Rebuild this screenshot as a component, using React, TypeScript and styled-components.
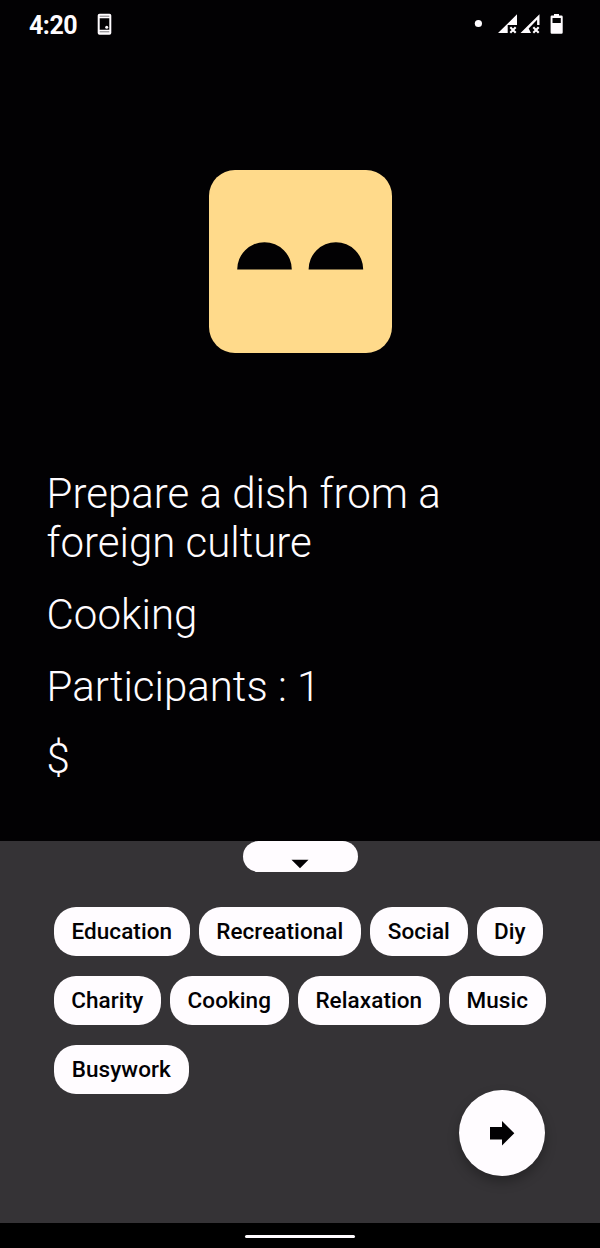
import React from "react";
import styled, { createGlobalStyle } from "styled-components";

const Global = createGlobalStyle`
  * { box-sizing: border-box; }
  body { margin: 0; background: #020103; font-family: Roboto, sans-serif; }
`;
const Screen = styled.main`
  width: 600px; height: 1248px; display: flex; flex-direction: column;
  background: #020103; color: #fffcff; overflow: hidden;
`;
const StatusBar = styled.header`
  height: 48px; flex: none; display: flex; align-items: flex-start; justify-content: space-between;
  padding: 0 36px 0 29px;
`;
const StatusGroup = styled.div`
  display: flex; align-items: flex-start;
`;
const Time = styled.span`
  width: 68px; padding-top: 12px; font-size: 25px; font-weight: 700; line-height: 28px; letter-spacing: -0.5px;
`;
const FaceArea = styled.section`
  flex: none; height: 421px; padding-top: 122px; display: flex; justify-content: center;
`;
const Face = styled.div`
  width: 183px; height: 183.3px; border-radius: 26px; background: #ffda8b;
  display: flex; justify-content: center; padding-top: 72px;
`;
const Details = styled.section`
  height: 372.3px; flex: none; padding-left: 46.6px; display: flex; flex-direction: column; gap: 23px;
  font-size: 42px; font-weight: 300; line-height: 49px;
`;
const Line = styled.p`
  margin: 0; width: 440px;
`;
const Sheet = styled.section`
  height: 382px; flex: none; background: #353336; display: flex; flex-direction: column;
`;
const Handle = styled.button`
  align-self: center; width: 115px; height: 31px; border: 0; border-radius: 16px; background: #fffcff;
  display: flex; justify-content: center; padding: 18px 0 0; flex: none;
`;
const Chips = styled.div`
  display: flex; flex-direction: column; gap: 19.8px; padding: 35px 0 0 53.8px;
`;
const Row = styled.div`
  display: flex; gap: 9px;
`;
const Chip = styled.button<{ $w: number }>`
  width: ${(p) => p.$w}px; height: 49px; border: 0; border-radius: 22px; padding: 0; background: #fffcff;
  color: #020103; font: 500 22.5px/49px Roboto, sans-serif; letter-spacing: 0.08px; white-space: nowrap;
`;
const Next = styled.button`
  align-self: flex-end; margin: -3.5px 54.8px 0 0; width: 86px; height: 86px; flex: none; border: 0; padding: 0;
  border-radius: 50%; background: #fffcff; box-shadow: 0 6px 12px rgba(0,0,0,.28);
  display: flex; align-items: center; justify-content: center;
`;
const NavBar = styled.footer`
  flex: 1; display: flex; justify-content: center; padding-top: 12px; background: #000;
`;
const HomePill = styled.div`
  width: 110px; height: 3px; border-radius: 2px; background: #fffcff;
`;

const rows: [string, number][][] = [
  [["Education", 136], ["Recreational", 162], ["Social", 98], ["Diy", 66]],
  [["Charity", 107], ["Cooking", 119], ["Relaxation", 142], ["Music", 97]],
  [["Busywork", 135]],
];

const PhoneIcon = () => (
  <svg width="16" height="40" viewBox="97 0 16 40">
    <path
      fillRule="evenodd"
      fill="#fffcff"
      d="M99.5 13.7h10a1.8 1.8 0 0 1 1.8 1.8v17.4a1.8 1.8 0 0 1-1.8 1.8h-10a1.8 1.8 0 0 1-1.8-1.8V15.5a1.8 1.8 0 0 1 1.8-1.8zM99.7 18.2v11.6h9.6V18.2z"
    />
    <path d="M99.7 16.2h9.6M99.7 31.8h9.6" stroke="#777578" strokeWidth="1" />
    <circle cx="106.7" cy="27.3" r="1.5" fill="#fffcff" />
  </svg>
);

const StatusIcons = () => (
  <svg width="92" height="40" viewBox="472 0 92 40" fill="#fffcff">
    <circle cx="478.4" cy="23.5" r="3.6" />
    <path d="M498 33L517 14.3V25h-9.3v8z" />
    <path d="M510.3 27.3l5.4 5.4m0-5.4l-5.4 5.4" stroke="#fffcff" strokeWidth="2.1" />
    <path d="M520.5 33L539.5 14.3V25h-2.4v-5.2L528.7 28.5l2.3 4.5z" />
    <path d="M533.3 27.3l5.4 5.4m0-5.4l-5.4 5.4" stroke="#fffcff" strokeWidth="2.1" />
    <path fillRule="evenodd" d="M554 14h5v1.6h2.5q1.2 0 1.2 1.2v15.7q0 1.2-1.2 1.2h-9.7q-1.2 0-1.2-1.2V16.8q0-1.2 1.2-1.2H554zM552.5 18v5h8.3v-5z" />
  </svg>
);

const Eyes = () => (
  <svg width="127" height="28" viewBox="0 0 127 28" fill="#020103">
    <path d="M0.2 27.5a27.3 27.3 0 0 1 54.6 0zM71.6 27.5a27.3 27.3 0 0 1 54.6 0z" />
  </svg>
);

export default function App() {
  return (
    <Screen>
      <Global />
      <StatusBar>
        <StatusGroup><Time>4:20</Time><PhoneIcon /></StatusGroup>
        <StatusIcons />
      </StatusBar>
      <FaceArea><Face><Eyes /></Face></FaceArea>
      <Details>
        <Line>Prepare a dish from a foreign culture</Line>
        <Line>Cooking</Line>
        <Line>Participants : 1</Line>
        <Line>$</Line>
      </Details>
      <Sheet>
        <Handle aria-label="Collapse"><svg width="18" height="10"><path d="M0.5 0.8h17L9 9.3z" fill="#020103" /></svg></Handle>
        <Chips>
          {rows.map((row, i) => (
            <Row key={i}>{row.map(([label, w]) => <Chip key={label} $w={w}>{label}</Chip>)}</Row>
          ))}
        </Chips>
        <Next aria-label="Next"><svg width="26" height="26" viewBox="0 0 26 26"><path d="M1 7h12V1l12.3 12.3L13 25.6v-6H1z" fill="#020103" /></svg></Next>
      </Sheet>
      <NavBar><HomePill /></NavBar>
    </Screen>
  );
}
